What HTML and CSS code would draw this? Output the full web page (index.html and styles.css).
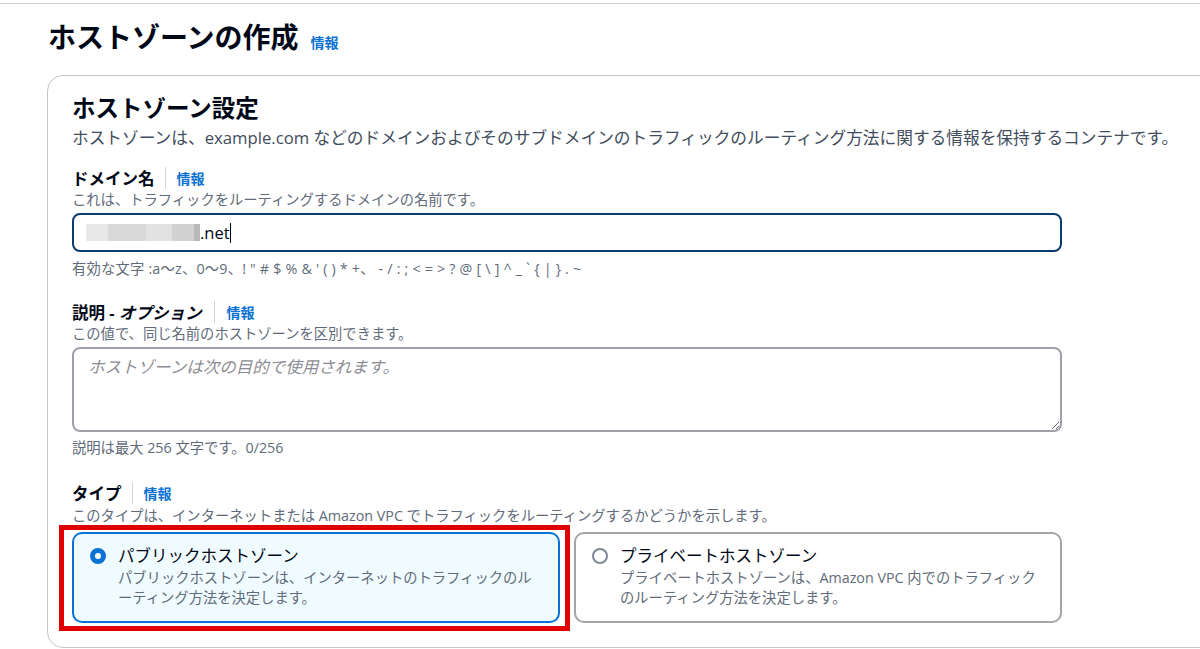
FILE: index.html
```html
<!DOCTYPE html>
<html lang="ja">
<head>
    <meta charset="UTF-8">
    <meta name="viewport" content="width=device-width, initial-scale=1.0">
    <title>ホストゾーンの作成</title>
    <link rel="stylesheet" href="styles.css">
</head>
<body>
    <div class="topline"></div>
    <div class="page">
        <div class="page-header">
            <h1>ホストゾーンの作成</h1>
            <a class="info" href="#">情報</a>
        </div>

        <div class="card">
            <h2>ホストゾーン設定</h2>
            <p class="card-desc">ホストゾーンは、example.com などのドメインおよびそのサブドメインのトラフィックのルーティング方法に関する情報を保持するコンテナです。</p>

            <div class="field field-first">
                <div class="label-row">
                    <span class="label">ドメイン名</span>
                    <span class="divider"></span>
                    <a class="info" href="#">情報</a>
                </div>
                <div class="hint">これは、トラフィックをルーティングするドメインの名前です。</div>
                <div class="input">
                    <span class="blur">
                        <span class="b1"></span><span class="b2"></span><span class="b3"></span><span class="b4"></span><span class="b5"></span>
                    </span><span class="value">.net</span><span class="caret"></span>
                </div>
                <div class="constraint">有効な文字 :a〜z、0〜9、! " # $ % &amp; ' ( ) * +、 - / : ; &lt; = &gt; ? @ [ \ ] ^ _ ` { | } . ~</div>
            </div>

            <div class="field">
                <div class="label-row">
                    <span class="label">説明 - <em>オプション</em></span>
                    <span class="divider"></span>
                    <a class="info" href="#">情報</a>
                </div>
                <div class="hint">この値で、同じ名前のホストゾーンを区別できます。</div>
                <textarea class="textarea" placeholder="ホストゾーンは次の目的で使用されます。"></textarea>
                <div class="constraint counter">説明は最大 256 文字です。0/256</div>
            </div>

            <div class="field field-type">
                <div class="label-row">
                    <span class="label">タイプ</span>
                    <span class="divider"></span>
                    <a class="info" href="#">情報</a>
                </div>
                <div class="hint">このタイプは、インターネットまたは Amazon VPC でトラフィックをルーティングするかどうかを示します。</div>
                <div class="tiles">
                    <div class="tile selected">
                        <span class="radio checked"></span>
                        <div class="tile-text">
                            <div class="tile-title">パブリックホストゾーン</div>
                            <div class="tile-desc">パブリックホストゾーンは、インターネットのトラフィックのルーティング方法を決定します。</div>
                        </div>
                        <div class="highlight"></div>
                    </div>
                    <div class="tile">
                        <span class="radio"></span>
                        <div class="tile-text">
                            <div class="tile-title">プライベートホストゾーン</div>
                            <div class="tile-desc">プライベートホストゾーンは、Amazon VPC 内でのトラフィックのルーティング方法を決定します。</div>
                        </div>
                    </div>
                </div>
            </div>
        </div>
    </div>
</body>
</html>
```

FILE: styles.css
```css
body {
    margin: 0;
    background: #ffffff;
    color: #000716;
    font-family: "Open Sans", "Noto Sans CJK JP", sans-serif;
    overflow: hidden;
}
.topline {
    height: 1px;
    margin-top: 3px;
    background-color: #cfcfcf;
}
.page {
    padding-left: 47px;
}
.page-header {
    display: flex;
    align-items: baseline;
    gap: 12px;
    margin-top: 16px;
    padding-left: 1px;
}
h1 {
    margin: 0;
    font-size: 28px;
    line-height: 34px;
    font-weight: 700;
}
.info {
    color: #0972d3;
    font-size: 14px;
    font-weight: 700;
    text-decoration: none;
}
.card {
    width: 1200px;
    margin-top: 21px;
    padding: 18px 24px 24px;
    border: 1px solid #c6c6cd;
    border-radius: 16px;
}
h2 {
    margin: 0;
    font-size: 23.5px;
    line-height: 28px;
    font-weight: 700;
}
.card-desc {
    margin: 4px 0 0;
    font-size: 16.7px;
    line-height: 24px;
    color: #414d5c;
}
.field {
    width: 990px;
    margin-top: 22px;
}
.field-first {
    margin-top: 16px;
}
.field-type {
    margin-top: 24px;
}
.label-row {
    display: flex;
    align-items: center;
    height: 24px;
}
.label {
    font-size: 16.5px;
    font-weight: 700;
}
.label em {
    font-style: italic;
    padding-right: 3px;
}
.divider {
    width: 1px;
    height: 22px;
    margin: 0 11px 0 10px;
    background-color: #d1d5db;
}
.hint,
.constraint {
    font-size: 14.3px;
    line-height: 19px;
    color: #5f6b7a;
}
.hint {
    margin-bottom: 4px;
}
.field-type .hint {
    margin-top: 1px;
}
.constraint {
    margin-top: 7px;
    letter-spacing: 0.2px;
}
.counter {
    margin-top: 6px;
    letter-spacing: 0;
}
.input {
    display: flex;
    align-items: center;
    height: 39px;
    padding: 0 12px;
    border: 2px solid #0b3a70;
    border-radius: 8px;
    box-sizing: border-box;
    font-size: 16.5px;
}
.blur {
    display: flex;
    height: 17px;
}
.blur span {
    display: block;
    height: 100%;
}
.b1 { width: 22px; background: #e8e8e8; }
.b2 { width: 38px; background: #d9d9d9; }
.b3 { width: 26px; background: #e2e2e2; }
.b4 { width: 22px; background: #d2d2d2; }
.b5 { width: 6px; background: #b9b9b9; }
.value {
    color: #000716;
}
.caret {
    width: 1px;
    height: 20px;
    background: #000716;
}
.textarea {
    display: block;
    width: 100%;
    height: 85px;
    margin-top: 3px;
    padding: 6px 14px;
    border: 2px solid #a0a0a8;
    border-radius: 8px;
    box-sizing: border-box;
    font-family: inherit;
    font-size: 16.5px;
    line-height: 24px;
    color: #000716;
}
.textarea::placeholder {
    color: #8c8c94;
    font-style: italic;
}
.tiles {
    display: grid;
    grid-template-columns: 1fr 1fr;
    gap: 14px;
    margin-top: 7px;
}
.tile {
    position: relative;
    display: flex;
    gap: 12px;
    height: 91px;
    padding: 10px 18px 0 16px;
    border: 2px solid #a4a4ab;
    border-radius: 10px;
    box-sizing: border-box;
}
.tile.selected {
    background-color: #f0fbff;
    border-color: #0972d3;
}
.radio {
    flex: none;
    width: 16px;
    height: 16px;
    margin-top: 4px;
    border: 2px solid #7d8998;
    border-radius: 50%;
    box-sizing: border-box;
    background: #ffffff;
}
.radio.checked {
    border: 5px solid #0972d3;
}
.tile-title {
    font-size: 16.5px;
    line-height: 24px;
}
.tile-desc {
    font-size: 14.3px;
    line-height: 20px;
    color: #5f6b7a;
}
.highlight {
    position: absolute;
    left: -15px;
    right: -12px;
    top: -9px;
    bottom: -10px;
    border: 5px solid #e00000;
    pointer-events: none;
}
```
